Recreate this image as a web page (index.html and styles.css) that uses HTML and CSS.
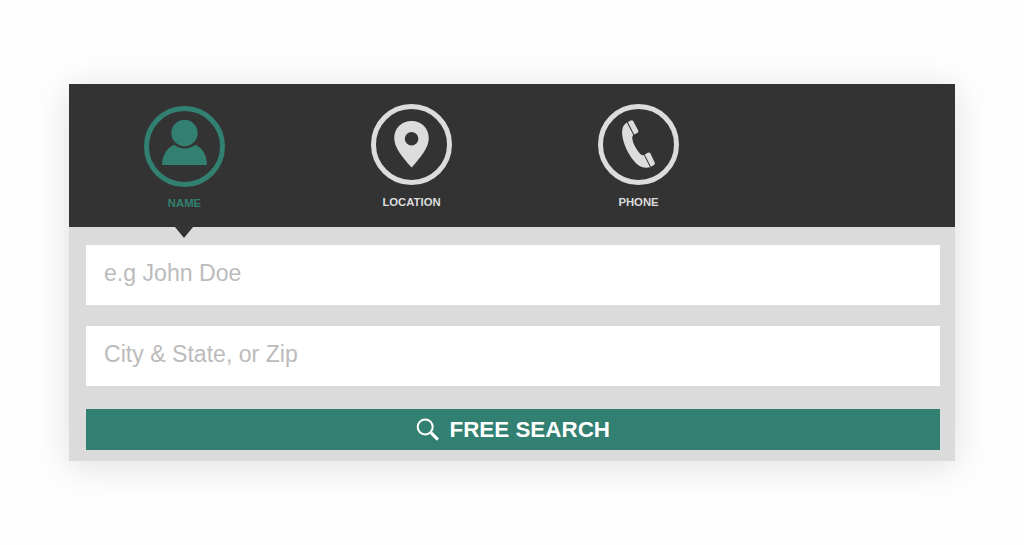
FILE: index.html
```html
<!DOCTYPE html>
<html lang="en">
<head>
    <meta charset="utf-8">
    <title>People Search</title>
    <link rel="stylesheet" href="styles.css">
</head>
<body>

    <form class="search">
        <!-- Search type tabs -->
        <div class="tabs">
            <a class="tab active">
                <svg class="icon" viewBox="0 0 81 81">
                    <circle class="ring" cx="40.5" cy="40.5" r="38"/>
                    <path d="M18 59C18.3 49 23 42 30 38.8C36 43.6 45 43.6 51.5 38.8C58.5 42 62.8 49 63 59Z"/>
                    <circle cx="40.5" cy="27" r="13.2"/>
                </svg>
                <span class="label">NAME</span>
            </a>
            <a class="tab">
                <svg class="icon" viewBox="0 0 81 81">
                    <circle class="ring" cx="40.5" cy="40.5" r="38"/>
                    <path fill-rule="evenodd" d="M40.6 17C50.3 17 57.8 24.3 57.8 34C57.8 43.5 50 53 40.6 63.6C31.2 53 23.2 43.5 23.2 34C23.2 24.3 30.8 17 40.6 17ZM40.6 27.9A6.8 6.8 0 1 0 40.6 41.5A6.8 6.8 0 1 0 40.6 27.9Z"/>
                </svg>
                <span class="label">LOCATION</span>
            </a>
            <a class="tab">
                <svg class="icon" viewBox="0 0 81 81">
                    <circle class="ring" cx="40.5" cy="40.5" r="38"/>
                    <path d="M28.8 18.4C24.2 21.2 23.2 27 24.8 34.5C27.1 44.5 32.3 53.5 38.3 59.4C42.6 63.6 47.2 64.4 52 63.3L45.9 50.9C43.8 51.8 42.1 50.2 40.5 47.8C37.7 44 35.4 40 34.6 36.2C34 33.5 34.1 32.2 35.3 30.9Z"/>
                    <path d="M29.8 18L32.8 16.5Q34.5 15.8 35.3 17.2L40.2 26.5Q40.9 28 39.6 28.8L36.2 30.6Z"/>
                    <path d="M46.7 50.5L49.9 48.7Q51.5 47.9 52.3 49.2L56.7 58.5Q57.4 60.1 56 60.9L52.9 62.8Z"/>
                </svg>
                <span class="label">PHONE</span>
            </a>
        </div>

        <!-- Fields -->
        <div class="fields">
            <input class="field" type="text" placeholder="e.g John Doe">
            <input class="field" type="text" placeholder="City &amp; State, or Zip">
            <button class="submit" type="button">
                <svg class="glass" viewBox="0 0 23 23">
                    <circle cx="9.2" cy="8.9" r="7.5"/>
                    <path class="handle" d="M14.9 14.6L21.9 21.6"/>
                </svg>
                <span>FREE SEARCH</span>
            </button>
        </div>
    </form>

</body>
</html>
```
FILE: styles.css
```css
body {
    box-sizing: border-box;
    min-height: 545px;
    margin: 0;
    padding-top: 84px;
    background: #fefefe;
    font-family: "Liberation Sans", Arial, sans-serif;
}

.search {
    width: 886px;
    height: 377px;
    margin-left: 69px;
    background: #dbdbdb;
    box-shadow: 0 5px 34px rgba(0, 0, 0, 0.13);
}

/* Tabs */
.tabs {
    display: flex;
    box-sizing: border-box;
    height: 143px;
    padding: 20px 0 0 2px;
    background: #333;
}

.tab {
    position: relative;
    display: flex;
    flex-direction: column;
    align-items: center;
    width: 227px;
    color: #dcdcdc;
}

.icon {
    width: 81px;
    height: 81px;
    fill: currentColor;
}

.ring {
    fill: none;
    stroke: currentColor;
    stroke-width: 5;
}

.label {
    margin-top: 11px;
    font-size: 11.3px;
    font-weight: bold;
    line-height: 13px;
}

.tab.active {
    padding-top: 1.5px;
    color: #328071;
}

.active .label {
    margin-top: 10px;
}

/* Pointer hanging below the active tab */
.tab.active::after {
    content: "";
    position: absolute;
    top: 122.5px;
    left: 104px;
    border: 9.5px solid transparent;
    border-top: 11px solid #333;
    border-bottom: 0;
}

/* Fields */
.fields {
    display: flex;
    flex-direction: column;
    padding: 18px 15px 0 17px;
}

.field {
    box-sizing: border-box;
    height: 60px;
    margin: 0 0 21px;
    padding: 0 18px 4px;
    border: 0;
    border-radius: 0;
    background: #fff;
    font: 23.1px "Liberation Sans", Arial, sans-serif;
}

.field::placeholder {
    color: #bbb;
    opacity: 1;
}

.submit {
    display: flex;
    align-items: center;
    justify-content: center;
    gap: 11px;
    height: 41px;
    margin: 2px 0 0 -0.5px;
    padding: 0;
    border: 0;
    background: #328071;
    color: #fff;
    font: bold 22.4px "Liberation Sans", Arial, sans-serif;
}

.glass {
    width: 23px;
    height: 23px;
    fill: none;
    stroke: #fff;
    stroke-width: 2;
}

.handle {
    stroke-width: 3;
}
```
